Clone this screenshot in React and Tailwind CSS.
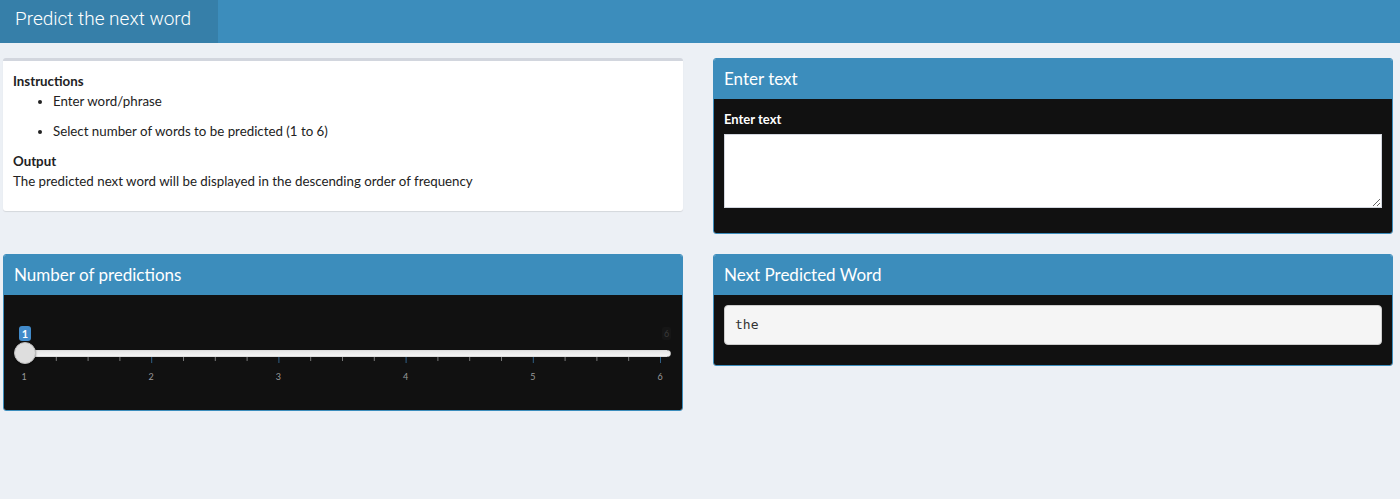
import React from 'react';

const font = { fontFamily: '"Lato", "Noto Sans", sans-serif' };

const BoxHeader = ({ title }) => (
  <div className="h-[40px] bg-[#3c8dbc] px-[10px] flex items-center pb-[2px]">
    <h3 className="text-[17px] text-white leading-none">{title}</h3>
  </div>
);

const Slider = () => {
  const majors = [1, 2, 3, 4, 5, 6];
  const ticks = Array.from({ length: 21 }, (_, i) => i);
  const step = 636 / 20;

  return (
    <div className="relative h-[95px]">
      {/* value badge */}
      <span className="absolute left-[5px] top-[21px] w-[12px] h-[15px] rounded-[3px] bg-[#428bca] text-white text-[11px] font-bold leading-[15px] text-center">
        1
      </span>
      {/* max label */}
      <span className="absolute left-[648px] top-[22px] px-[2px] h-[13px] rounded-[2px] bg-[#161616] text-[#3a3a3a] text-[9px] leading-[13px]">
        6
      </span>
      {/* track */}
      <div className="absolute left-[10px] top-[45px] w-[647px] h-[7px] rounded-full bg-gradient-to-b from-[#e6e6e6] to-[#f4f4f4] border border-[#ddd]" />
      {/* grid */}
      <svg className="absolute left-0 top-[52px]" width="660" height="8">
        {ticks.map((i) => {
          const x = 10.5 + i * step;
          const major = i % 4 === 0;
          return (
            <line
              key={i}
              x1={x}
              x2={x}
              y1="0"
              y2={major ? 6 : 4}
              stroke={major ? '#2f5f85' : '#777'}
              strokeWidth="1"
            />
          );
        })}
      </svg>
      {majors.map((m, i) => (
        <span
          key={m}
          className="absolute top-[65px] w-[20px] -ml-[10px] text-center text-[9px] text-[#9a9a9a]"
          style={{ left: 10 + i * step * 4 }}
        >
          {m}
        </span>
      ))}
      {/* handle */}
      <div className="absolute left-[0px] top-[37px] w-[22px] h-[22px] rounded-full bg-[#dedede] border border-[#bbb] shadow-[0_1px_2px_rgba(0,0,0,0.4)]" />
    </div>
  );
};

export default function App() {
  return (
    <div className="min-h-[499px] bg-[#ecf0f5] text-[#333]" style={font}>
      {/* top bar */}
      <header className="h-[43px] bg-[#3c8dbc] flex">
        <div className="w-[218px] bg-[#367fa9] flex items-center pl-[15px] pb-[5px]">
          <span className="text-[19px] font-light text-white" style={{ fontFamily: '"Roboto", "Liberation Sans", sans-serif' }}>
            Predict the next word
          </span>
        </div>
      </header>

      <div className="pt-[15px] pl-[3px] flex flex-col gap-[20px]">
        {/* row 1 */}
        <div className="flex items-start gap-[30px]">
          <div className="w-[680px] bg-white border-t-[3px] border-[#d2d6de] rounded-[3px] shadow-[0_1px_1px_rgba(0,0,0,0.1)] p-[10px] text-[13.3px] leading-[20px] text-[#222]">
            <p className="font-bold">Instructions</p>
            <ul className="list-disc pl-[40px] mb-[0px]">
              <li className="mb-[10px]">Enter word/phrase</li>
              <li className="mb-[10px]">Select number of words to be predicted (1 to 6)</li>
            </ul>
            <p className="font-bold">Output</p>
            <p className="mb-[10px]">The predicted next word will be displayed in the descending order of frequency</p>
          </div>

          <div className="w-[680px] border border-[#3c8dbc] rounded-[3px] overflow-hidden">
            <BoxHeader title="Enter text" />
            <div className="bg-[#111] p-[10px]">
              <label className="block text-white text-[13px] font-bold leading-[20px] mb-[5px]">Enter text</label>
              <textarea className="block w-full h-[74px] bg-white border border-[#d2d6de] mb-[15px]" />
            </div>
          </div>
        </div>

        {/* row 2 */}
        <div className="flex items-start gap-[30px]">
          <div className="w-[680px] border border-[#3c8dbc] rounded-[3px] overflow-hidden">
            <BoxHeader title="Number of predictions" />
            <div className="bg-[#111] p-[10px]">
              <Slider />
            </div>
          </div>

          <div className="w-[680px] border border-[#3c8dbc] rounded-[3px] overflow-hidden">
            <BoxHeader title="Next Predicted Word" />
            <div className="bg-[#111] p-[10px]">
              <pre
                className="h-[40px] bg-[#f5f5f5] border border-[#ccc] rounded-[4px] px-[10px] flex items-center text-[13px] text-[#333] mb-[10px]"
                style={{ fontFamily: '"DejaVu Sans Mono", "Liberation Mono", monospace' }}
              >
                the
              </pre>
            </div>
          </div>
        </div>
      </div>
    </div>
  );
}
